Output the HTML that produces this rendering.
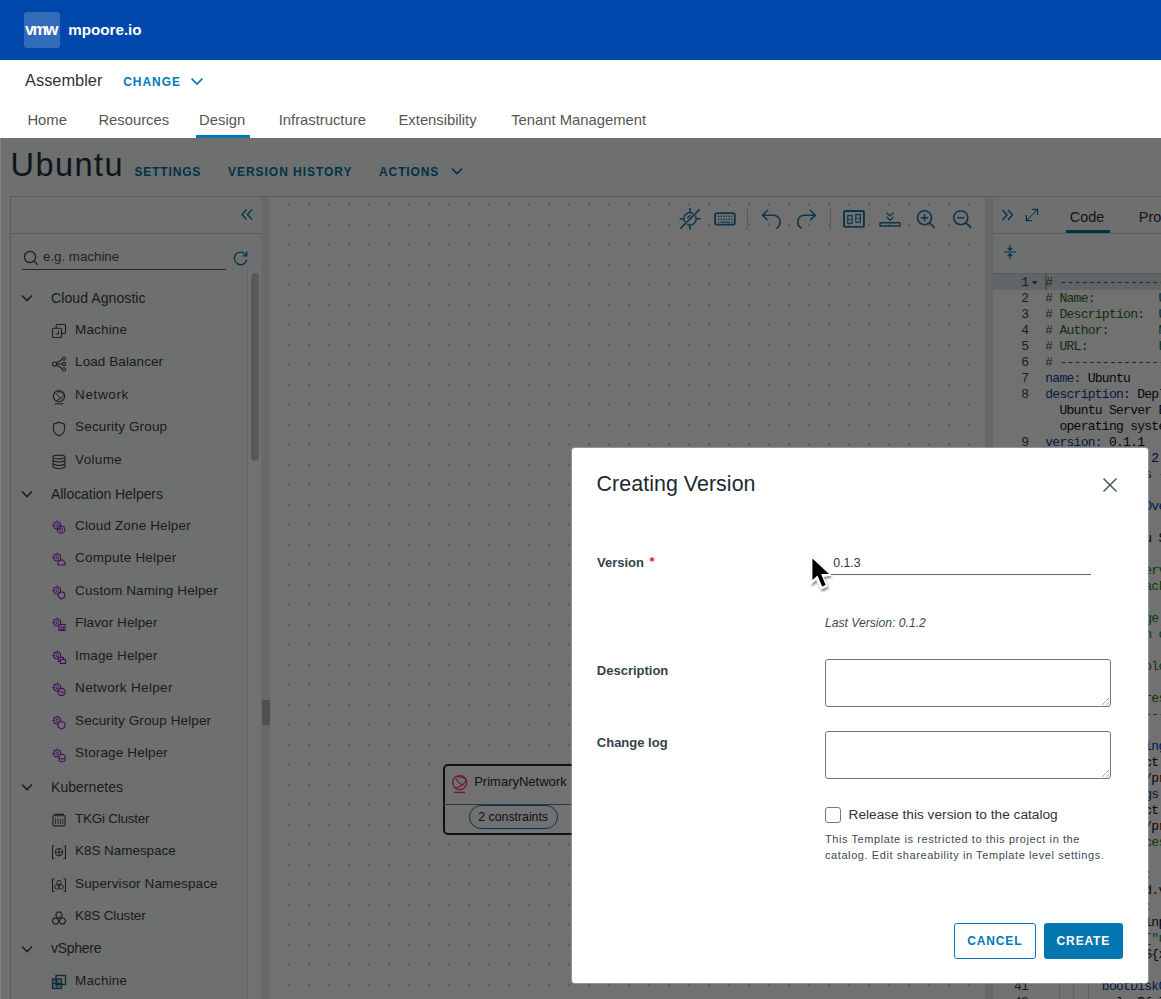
<!DOCTYPE html><html><head><meta charset="utf-8"><style>
html,body{margin:0;padding:0;width:1161px;height:999px;overflow:hidden;background:#fff;}
body{position:relative;font-family:"Liberation Sans",sans-serif;}
.t{position:absolute;white-space:pre;}
.r{position:absolute;display:block;}
</style></head><body>
<div class="r" style="left:0px;top:0px;width:1161px;height:60px;background:#0047ab;"></div>
<div class="r" style="left:24px;top:12px;width:36px;height:36px;background:rgba(255,255,255,0.2);border-radius:3px;"></div>
<div class="t" style="left:25.00px;top:17.53px;font-size:16.5px;line-height:23.1px;color:#fff;font-weight:bold;font-style:normal;font-family:'Liberation Sans', sans-serif;letter-spacing:-1.7px;">vmw</div>
<div class="t" style="left:68.20px;top:18.99px;font-size:15.2px;line-height:21.28px;color:#fff;font-weight:bold;font-style:normal;font-family:'Liberation Sans', sans-serif;letter-spacing:0px;">mpoore.io</div>
<div class="t" style="left:25.00px;top:69.03px;font-size:16.4px;line-height:22.96px;color:#333;font-weight:normal;font-style:normal;font-family:'Liberation Sans', sans-serif;letter-spacing:0px;">Assembler</div>
<div class="t" style="left:123.20px;top:73.74px;font-size:12px;line-height:16.8px;color:#0079b8;font-weight:bold;font-style:normal;font-family:'Liberation Sans', sans-serif;letter-spacing:0.95px;">CHANGE</div>
<svg class="r" style="left:189px;top:75px;" width="16" height="12" viewBox="0 0 16 12"><polyline points="2.6,3.6 8,9 13.4,3.6" fill="none" stroke="#0079b8" stroke-width="1.6"/></svg>
<div class="t" style="left:27.40px;top:109.61px;font-size:14.8px;line-height:20.72px;color:#565656;font-weight:normal;font-style:normal;font-family:'Liberation Sans', sans-serif;letter-spacing:0px;">Home</div>
<div class="t" style="left:98.40px;top:109.61px;font-size:14.8px;line-height:20.72px;color:#565656;font-weight:normal;font-style:normal;font-family:'Liberation Sans', sans-serif;letter-spacing:0px;">Resources</div>
<div class="t" style="left:199.10px;top:109.61px;font-size:14.8px;line-height:20.72px;color:#565656;font-weight:normal;font-style:normal;font-family:'Liberation Sans', sans-serif;letter-spacing:0px;">Design</div>
<div class="t" style="left:278.70px;top:109.61px;font-size:14.8px;line-height:20.72px;color:#565656;font-weight:normal;font-style:normal;font-family:'Liberation Sans', sans-serif;letter-spacing:0px;">Infrastructure</div>
<div class="t" style="left:398.50px;top:109.61px;font-size:14.8px;line-height:20.72px;color:#565656;font-weight:normal;font-style:normal;font-family:'Liberation Sans', sans-serif;letter-spacing:0px;">Extensibility</div>
<div class="t" style="left:511.20px;top:109.61px;font-size:14.8px;line-height:20.72px;color:#565656;font-weight:normal;font-style:normal;font-family:'Liberation Sans', sans-serif;letter-spacing:0px;">Tenant Management</div>
<div class="r" style="left:196px;top:135px;width:54px;height:3px;background:#0079b8;"></div>
<div class="r" style="left:0px;top:138px;width:1161px;height:861px;background:#f9fcfb;"></div>
<div class="t" style="left:10.60px;top:142.98px;font-size:32.5px;line-height:45.5px;color:#21333b;font-weight:normal;font-style:normal;font-family:'Liberation Sans', sans-serif;letter-spacing:1.45px;">Ubuntu</div>
<div class="t" style="left:134.40px;top:164.14px;font-size:12px;line-height:16.8px;color:#0072a3;font-weight:bold;font-style:normal;font-family:'Liberation Sans', sans-serif;letter-spacing:0.85px;">SETTINGS</div>
<div class="t" style="left:228.10px;top:164.14px;font-size:12px;line-height:16.8px;color:#0072a3;font-weight:bold;font-style:normal;font-family:'Liberation Sans', sans-serif;letter-spacing:0.95px;">VERSION HISTORY</div>
<div class="t" style="left:379.10px;top:164.14px;font-size:12px;line-height:16.8px;color:#0072a3;font-weight:bold;font-style:normal;font-family:'Liberation Sans', sans-serif;letter-spacing:0.85px;">ACTIONS</div>
<svg class="r" style="left:449px;top:164px;" width="16" height="14" viewBox="0 0 16 14"><polyline points="2.8,4.5 8,9.6 13.2,4.5" fill="none" stroke="#0072a3" stroke-width="1.6"/></svg>
<div class="r" style="left:10px;top:196px;width:1151px;height:1px;background:#c6cfd5;"></div>
<div class="r" style="left:10px;top:197px;width:251px;height:802px;background:#f9fcfb;"></div>
<div class="r" style="left:10px;top:196px;width:1px;height:803px;background:#c6cfd5;"></div>
<div class="r" style="left:10px;top:233px;width:252px;height:1px;background:#c6cfd5;"></div>
<svg class="r" style="left:240px;top:207px;" width="14" height="15" viewBox="0 0 14 15"><polyline points="6.5,2.5 2,7.5 6.5,12.5" fill="none" stroke="#0072a3" stroke-width="1.3"/><polyline points="12,2.5 7.5,7.5 12,12.5" fill="none" stroke="#0072a3" stroke-width="1.3"/></svg>
<svg class="r" style="left:22px;top:249px;" width="18" height="18" viewBox="0 0 18 18"><circle cx="8" cy="8" r="5.6" fill="none" stroke="#3a3f43" stroke-width="1.3"/><line x1="12.2" y1="12.2" x2="15.6" y2="15.6" stroke="#3a3f43" stroke-width="1.3"/></svg>
<div class="t" style="left:43.00px;top:247.98px;font-size:13.3px;line-height:18.62px;color:#4d4d4d;font-weight:normal;font-style:normal;font-family:'Liberation Sans', sans-serif;letter-spacing:0px;">e.g. machine</div>
<div class="r" style="left:22px;top:269px;width:204px;height:1px;background:#4d5a61;"></div>
<svg class="r" style="left:232px;top:249px;" width="18" height="18" viewBox="0 0 18 18"><path d="M14.6,7.2 A6.3,6.3 0 1 0 14.9,10.5" fill="none" stroke="#0072a3" stroke-width="1.3"/><polyline points="10.6,6.8 14.8,6.8 14.8,2.6" fill="none" stroke="#0072a3" stroke-width="1.3"/></svg>
<div class="r" style="left:247px;top:270px;width:14px;height:729px;background:#fff;border-left:1px solid #e3e3e3;box-sizing:border-box;"></div>
<div class="r" style="left:251px;top:273px;width:8px;height:188px;background:#c8c8c8;border-radius:4px;"></div>
<div class="r" style="left:261px;top:197px;width:9px;height:802px;background:#ececec;"></div>
<div class="r" style="left:262px;top:700px;width:8px;height:25px;background:#b4b4b4;"></div>
<svg class="r" style="left:20px;top:293.40000000000003px;" width="14" height="10" viewBox="0 0 14 10"><polyline points="2,2.5 7,7.6 12,2.5" fill="none" stroke="#3a3f43" stroke-width="1.5"/></svg>
<div class="t" style="left:51.00px;top:288.65px;font-size:14px;line-height:19.6px;color:#3a3f43;font-weight:normal;font-style:normal;font-family:'Liberation Sans', sans-serif;letter-spacing:0.09px;">Cloud Agnostic</div>
<div class="t" style="left:75.10px;top:320.67px;font-size:13.5px;line-height:18.9px;color:#3a3f43;font-weight:normal;font-style:normal;font-family:'Liberation Sans', sans-serif;letter-spacing:0.13px;">Machine</div>
<svg class="r" style="left:51px;top:322.8px;" width="16" height="16" viewBox="0 0 16 16"><rect x="5.2" y="1.5" width="9.3" height="9" rx="1" fill="none" stroke="#454545" stroke-width="1.1"/><rect x="1.5" y="5.2" width="9" height="9.3" rx="1" fill="#fafafa" stroke="#454545" stroke-width="1.1"/><polyline points="7.5,7.5 7.5,11 4.5,11" fill="none" stroke="#454545" stroke-width="1"/></svg>
<div class="t" style="left:75.10px;top:353.47px;font-size:13.5px;line-height:18.9px;color:#3a3f43;font-weight:normal;font-style:normal;font-family:'Liberation Sans', sans-serif;letter-spacing:0.08px;">Load Balancer</div>
<svg class="r" style="left:51px;top:355.6px;" width="16" height="16" viewBox="0 0 16 16"><circle cx="3.5" cy="8" r="2" fill="none" stroke="#454545" stroke-width="1.1"/><circle cx="13" cy="2.6" r="1.6" fill="none" stroke="#454545" stroke-width="1.1"/><circle cx="13" cy="8" r="1.6" fill="none" stroke="#454545" stroke-width="1.1"/><circle cx="13" cy="13.4" r="1.6" fill="none" stroke="#454545" stroke-width="1.1"/><path d="M5.5,8 H11.4 M5.2,7 L11.5,3.2 M5.2,9 L11.5,12.8" stroke="#454545" stroke-width="1.1" fill="none"/></svg>
<div class="t" style="left:75.10px;top:386.37px;font-size:13.5px;line-height:18.9px;color:#3a3f43;font-weight:normal;font-style:normal;font-family:'Liberation Sans', sans-serif;letter-spacing:0.62px;">Network</div>
<svg class="r" style="left:51px;top:388.5px;" width="16" height="16" viewBox="0 0 16 16"><circle cx="8" cy="7.2" r="5.6" fill="none" stroke="#454545" stroke-width="1.1"/><path d="M5.1,4.1 Q7.1,8.1 10.3,9.2 L13.3,5.2 M10.3,9.2 L4.7,11.9 M6,2.9 Q10,2.3 12.8,4.6" fill="none" stroke="#454545" stroke-width="0.9"/><line x1="3.7" y1="14.8" x2="12.3" y2="14.8" stroke="#454545" stroke-width="1.1"/></svg>
<div class="t" style="left:75.10px;top:418.47px;font-size:13.5px;line-height:18.9px;color:#3a3f43;font-weight:normal;font-style:normal;font-family:'Liberation Sans', sans-serif;letter-spacing:0.15px;">Security Group</div>
<svg class="r" style="left:51px;top:420.6px;" width="16" height="16" viewBox="0 0 16 16"><path d="M8,1.2 L13.5,3.2 V8 Q13.5,12.5 8,15 Q2.5,12.5 2.5,8 V3.2 Z" fill="none" stroke="#454545" stroke-width="1.1"/></svg>
<div class="t" style="left:75.10px;top:451.37px;font-size:13.5px;line-height:18.9px;color:#3a3f43;font-weight:normal;font-style:normal;font-family:'Liberation Sans', sans-serif;letter-spacing:0.32px;">Volume</div>
<svg class="r" style="left:51px;top:453.5px;" width="16" height="16" viewBox="0 0 16 16"><ellipse cx="8" cy="3" rx="6" ry="1.9" fill="none" stroke="#454545" stroke-width="1.1"/><path d="M2,3 V13 Q8,16.5 14,13 V3 M2,6.5 Q8,9.5 14,6.5 M2,10 Q8,13 14,10" fill="none" stroke="#454545" stroke-width="1.1"/></svg>
<svg class="r" style="left:20px;top:489.3px;" width="14" height="10" viewBox="0 0 14 10"><polyline points="2,2.5 7,7.6 12,2.5" fill="none" stroke="#3a3f43" stroke-width="1.5"/></svg>
<div class="t" style="left:51.00px;top:484.55px;font-size:14px;line-height:19.6px;color:#3a3f43;font-weight:normal;font-style:normal;font-family:'Liberation Sans', sans-serif;letter-spacing:-0.05px;">Allocation Helpers</div>
<div class="t" style="left:75.10px;top:516.57px;font-size:13.5px;line-height:18.9px;color:#3a3f43;font-weight:normal;font-style:normal;font-family:'Liberation Sans', sans-serif;letter-spacing:0.14px;">Cloud Zone Helper</div>
<svg class="r" style="left:51px;top:518.6999999999999px;" width="16" height="16" viewBox="0 0 16 16"><circle cx="6.2" cy="6.5" r="3.5" fill="none" stroke="#9a1ccf" stroke-width="1.15"/><circle cx="6.2" cy="6.5" r="1.4" fill="none" stroke="#9a1ccf" stroke-width="0.9"/><path d="M6.2,1.4 V2.9 M1.1,6.5 H2.6 M2.6,2.9 L3.6,3.9" stroke="#9a1ccf" stroke-width="0.9"/><circle cx="10" cy="10.5" r="3.8" fill="none" stroke="#9a1ccf" stroke-width="1.1"/><circle cx="10" cy="10.5" r="1.6" fill="none" stroke="#9a1ccf" stroke-width="1"/></svg>
<div class="t" style="left:75.10px;top:549.07px;font-size:13.5px;line-height:18.9px;color:#3a3f43;font-weight:normal;font-style:normal;font-family:'Liberation Sans', sans-serif;letter-spacing:0.22px;">Compute Helper</div>
<svg class="r" style="left:51px;top:551.1999999999999px;" width="16" height="16" viewBox="0 0 16 16"><circle cx="6.2" cy="6.5" r="3.5" fill="none" stroke="#9a1ccf" stroke-width="1.15"/><circle cx="6.2" cy="6.5" r="1.4" fill="none" stroke="#9a1ccf" stroke-width="0.9"/><path d="M6.2,1.4 V2.9 M1.1,6.5 H2.6 M2.6,2.9 L3.6,3.9" stroke="#9a1ccf" stroke-width="0.9"/><path d="M7,14 H14 Q15,11 12.5,10 Q11.5,8 9.5,9.5 Q7,9.5 7,12 Z" fill="#fafafa" stroke="#9a1ccf" stroke-width="1.1"/></svg>
<div class="t" style="left:75.10px;top:581.67px;font-size:13.5px;line-height:18.9px;color:#3a3f43;font-weight:normal;font-style:normal;font-family:'Liberation Sans', sans-serif;letter-spacing:0.12px;">Custom Naming Helper</div>
<svg class="r" style="left:51px;top:583.8px;" width="16" height="16" viewBox="0 0 16 16"><circle cx="6.2" cy="6.5" r="3.5" fill="none" stroke="#9a1ccf" stroke-width="1.15"/><circle cx="6.2" cy="6.5" r="1.4" fill="none" stroke="#9a1ccf" stroke-width="0.9"/><path d="M6.2,1.4 V2.9 M1.1,6.5 H2.6 M2.6,2.9 L3.6,3.9" stroke="#9a1ccf" stroke-width="0.9"/><path d="M8,8.5 L13,8 L14,13 L10,15 L7,12 Z" fill="#fafafa" stroke="#9a1ccf" stroke-width="1.1"/></svg>
<div class="t" style="left:75.10px;top:614.17px;font-size:13.5px;line-height:18.9px;color:#3a3f43;font-weight:normal;font-style:normal;font-family:'Liberation Sans', sans-serif;letter-spacing:0.11px;">Flavor Helper</div>
<svg class="r" style="left:51px;top:616.3px;" width="16" height="16" viewBox="0 0 16 16"><circle cx="6.2" cy="6.5" r="3.5" fill="none" stroke="#9a1ccf" stroke-width="1.15"/><circle cx="6.2" cy="6.5" r="1.4" fill="none" stroke="#9a1ccf" stroke-width="0.9"/><path d="M6.2,1.4 V2.9 M1.1,6.5 H2.6 M2.6,2.9 L3.6,3.9" stroke="#9a1ccf" stroke-width="0.9"/><rect x="8" y="8.5" width="6" height="6" fill="#fafafa" stroke="#9a1ccf" stroke-width="1.1"/><rect x="10" y="11" width="2.5" height="2.5" fill="none" stroke="#9a1ccf" stroke-width="0.9"/></svg>
<div class="t" style="left:75.10px;top:646.67px;font-size:13.5px;line-height:18.9px;color:#3a3f43;font-weight:normal;font-style:normal;font-family:'Liberation Sans', sans-serif;letter-spacing:0.12px;">Image Helper</div>
<svg class="r" style="left:51px;top:648.8px;" width="16" height="16" viewBox="0 0 16 16"><circle cx="6.2" cy="6.5" r="3.5" fill="none" stroke="#9a1ccf" stroke-width="1.15"/><circle cx="6.2" cy="6.5" r="1.4" fill="none" stroke="#9a1ccf" stroke-width="0.9"/><path d="M6.2,1.4 V2.9 M1.1,6.5 H2.6 M2.6,2.9 L3.6,3.9" stroke="#9a1ccf" stroke-width="0.9"/><rect x="7.5" y="8.5" width="5" height="4" fill="#fafafa" stroke="#9a1ccf" stroke-width="1.1"/><rect x="9.5" y="10.5" width="5" height="4" fill="#fafafa" stroke="#9a1ccf" stroke-width="1.1"/></svg>
<div class="t" style="left:75.10px;top:679.27px;font-size:13.5px;line-height:18.9px;color:#3a3f43;font-weight:normal;font-style:normal;font-family:'Liberation Sans', sans-serif;letter-spacing:0.33px;">Network Helper</div>
<svg class="r" style="left:51px;top:681.4px;" width="16" height="16" viewBox="0 0 16 16"><circle cx="6.2" cy="6.5" r="3.5" fill="none" stroke="#9a1ccf" stroke-width="1.15"/><circle cx="6.2" cy="6.5" r="1.4" fill="none" stroke="#9a1ccf" stroke-width="0.9"/><path d="M6.2,1.4 V2.9 M1.1,6.5 H2.6 M2.6,2.9 L3.6,3.9" stroke="#9a1ccf" stroke-width="0.9"/><circle cx="10.5" cy="11" r="3.6" fill="#fafafa" stroke="#9a1ccf" stroke-width="1.1"/><path d="M8,10 L13,12" stroke="#9a1ccf" stroke-width="1"/></svg>
<div class="t" style="left:75.10px;top:711.77px;font-size:13.5px;line-height:18.9px;color:#3a3f43;font-weight:normal;font-style:normal;font-family:'Liberation Sans', sans-serif;letter-spacing:0.12px;">Security Group Helper</div>
<svg class="r" style="left:51px;top:713.9px;" width="16" height="16" viewBox="0 0 16 16"><circle cx="6.2" cy="6.5" r="3.5" fill="none" stroke="#9a1ccf" stroke-width="1.15"/><circle cx="6.2" cy="6.5" r="1.4" fill="none" stroke="#9a1ccf" stroke-width="0.9"/><path d="M6.2,1.4 V2.9 M1.1,6.5 H2.6 M2.6,2.9 L3.6,3.9" stroke="#9a1ccf" stroke-width="0.9"/><path d="M10.5,7.5 L14,8.8 V11.5 Q14,14 10.5,15 Q7,14 7,11.5 V8.8 Z" fill="#fafafa" stroke="#9a1ccf" stroke-width="1.1"/></svg>
<div class="t" style="left:75.10px;top:744.37px;font-size:13.5px;line-height:18.9px;color:#3a3f43;font-weight:normal;font-style:normal;font-family:'Liberation Sans', sans-serif;letter-spacing:0.15px;">Storage Helper</div>
<svg class="r" style="left:51px;top:746.5px;" width="16" height="16" viewBox="0 0 16 16"><circle cx="6.2" cy="6.5" r="3.5" fill="none" stroke="#9a1ccf" stroke-width="1.15"/><circle cx="6.2" cy="6.5" r="1.4" fill="none" stroke="#9a1ccf" stroke-width="0.9"/><path d="M6.2,1.4 V2.9 M1.1,6.5 H2.6 M2.6,2.9 L3.6,3.9" stroke="#9a1ccf" stroke-width="0.9"/><ellipse cx="11" cy="8.5" rx="3" ry="1.2" fill="#fafafa" stroke="#9a1ccf" stroke-width="1"/><path d="M8,8.5 V14 Q11,15.8 14,14 V8.5 M8,11.3 Q11,13 14,11.3" fill="#fafafa" stroke="#9a1ccf" stroke-width="1"/></svg>
<svg class="r" style="left:20px;top:782.4px;" width="14" height="10" viewBox="0 0 14 10"><polyline points="2,2.5 7,7.6 12,2.5" fill="none" stroke="#3a3f43" stroke-width="1.5"/></svg>
<div class="t" style="left:51.00px;top:777.65px;font-size:14px;line-height:19.6px;color:#3a3f43;font-weight:normal;font-style:normal;font-family:'Liberation Sans', sans-serif;letter-spacing:0.04px;">Kubernetes</div>
<div class="t" style="left:75.10px;top:809.87px;font-size:13.5px;line-height:18.9px;color:#3a3f43;font-weight:normal;font-style:normal;font-family:'Liberation Sans', sans-serif;letter-spacing:-0.27px;">TKGi Cluster</div>
<svg class="r" style="left:51px;top:812.0px;" width="16" height="16" viewBox="0 0 16 16"><path d="M3,2.3 H13" stroke="#454545" stroke-width="1.2"/><path d="M1.9,3.8 H14.1 V12.5 Q14.1,13.9 12.7,13.9 H3.3 Q1.9,13.9 1.9,12.5 Z" fill="none" stroke="#454545" stroke-width="1.1"/><path d="M4.6,6.5 V12 M7,6.5 V12 M9.4,6.5 V12 M11.8,6.5 V12" stroke="#454545" stroke-width="0.9"/></svg>
<div class="t" style="left:75.10px;top:841.87px;font-size:13.5px;line-height:18.9px;color:#3a3f43;font-weight:normal;font-style:normal;font-family:'Liberation Sans', sans-serif;letter-spacing:-0.06px;">K8S Namespace</div>
<svg class="r" style="left:51px;top:844.0px;" width="16" height="16" viewBox="0 0 16 16"><path d="M3.5,2 H1.5 V14.5 H3.5 M12.5,2 H14.5 V14.5 H12.5" fill="none" stroke="#454545" stroke-width="1.1"/><circle cx="8" cy="8.2" r="3.8" fill="none" stroke="#454545" stroke-width="1"/><path d="M8,4.5 V12 M4.3,8.2 H11.7" stroke="#454545" stroke-width="1"/></svg>
<div class="t" style="left:75.10px;top:874.67px;font-size:13.5px;line-height:18.9px;color:#3a3f43;font-weight:normal;font-style:normal;font-family:'Liberation Sans', sans-serif;letter-spacing:0.11px;">Supervisor Namespace</div>
<svg class="r" style="left:51px;top:876.8px;" width="16" height="16" viewBox="0 0 16 16"><path d="M3.5,2 H1.5 V14.5 H3.5 M12.5,2 H14.5 V14.5 H12.5" fill="none" stroke="#454545" stroke-width="1.1"/><circle cx="8" cy="5.6" r="2.2" fill="none" stroke="#454545" stroke-width="1"/><circle cx="5.8" cy="10" r="2.2" fill="none" stroke="#454545" stroke-width="1"/><circle cx="10.2" cy="10" r="2.2" fill="none" stroke="#454545" stroke-width="1"/></svg>
<div class="t" style="left:75.10px;top:907.47px;font-size:13.5px;line-height:18.9px;color:#3a3f43;font-weight:normal;font-style:normal;font-family:'Liberation Sans', sans-serif;letter-spacing:-0.15px;">K8S Cluster</div>
<svg class="r" style="left:51px;top:909.5999999999999px;" width="16" height="16" viewBox="0 0 16 16"><polygon points="11.30,5.00 9.65,7.86 6.35,7.86 4.70,5.00 6.35,2.14 9.65,2.14" fill="none" stroke="#454545" stroke-width="1.1"/><polygon points="7.90,11.00 6.25,13.86 2.95,13.86 1.30,11.00 2.95,8.14 6.25,8.14" fill="none" stroke="#454545" stroke-width="1.1"/><polygon points="14.70,11.00 13.05,13.86 9.75,13.86 8.10,11.00 9.75,8.14 13.05,8.14" fill="none" stroke="#454545" stroke-width="1.1"/></svg>
<svg class="r" style="left:20px;top:944.1999999999999px;" width="14" height="10" viewBox="0 0 14 10"><polyline points="2,2.5 7,7.6 12,2.5" fill="none" stroke="#3a3f43" stroke-width="1.5"/></svg>
<div class="t" style="left:51.00px;top:939.45px;font-size:14px;line-height:19.6px;color:#3a3f43;font-weight:normal;font-style:normal;font-family:'Liberation Sans', sans-serif;letter-spacing:-0.27px;">vSphere</div>
<div class="t" style="left:75.10px;top:971.67px;font-size:13.5px;line-height:18.9px;color:#3a3f43;font-weight:normal;font-style:normal;font-family:'Liberation Sans', sans-serif;letter-spacing:0.13px;">Machine</div>
<svg class="r" style="left:51px;top:973.8px;" width="16" height="16" viewBox="0 0 16 16"><rect x="5" y="1.5" width="9.5" height="9" fill="none" stroke="#1d5e7e" stroke-width="1.3"/><rect x="1.5" y="5" width="9" height="9.5" fill="#1d5e7e" fill-opacity="0.25" stroke="#1d5e7e" stroke-width="1.3"/><line x1="1.5" y1="9.5" x2="10.5" y2="9.5" stroke="#1d5e7e" stroke-width="1"/><line x1="6" y1="5" x2="6" y2="14.5" stroke="#1d5e7e" stroke-width="1"/></svg>
<div class="r" style="left:270px;top:197px;width:715px;height:802px;background-color:#fff;background-image:radial-gradient(circle at 1px 1px,#bcc4c9 0,#bcc4c9 0.85px,rgba(255,255,255,0) 1.4px);background-size:20px 20px;background-position:18.2px 6.6px;"></div>
<svg class="r" style="left:670px;top:200px;" width="320" height="40" viewBox="0 0 320 40"><g transform="translate(-670,-200)" fill="none" stroke="#1d78ad"><circle cx="690" cy="218.8" r="6.2" stroke-width="1.5"/><path d="M690,208 V211.8 M690,225.8 V229.6 M679.6,218.8 H683.4 M696.6,218.8 H700.4" stroke-width="1.6"/><path d="M687.6,218.5 A2.6,2.6 0 0 1 691.5,216.4" stroke-width="1.3"/><line x1="680.3" y1="228.6" x2="699.6" y2="209.4" stroke="#fff" stroke-width="3.2"/><line x1="680.3" y1="228.6" x2="699.6" y2="209.4" stroke-width="1.5"/><rect x="715.1" y="213.2" width="19.7" height="11.5" rx="2" stroke-width="1.8"/><path d="M718,216.3 H732.6 M718,219.2 H732.6" stroke-width="1.4" stroke-dasharray="1.4 1.2"/><path d="M718,222.2 H719.3 M720.6,222.2 H729.8 M731.2,222.2 H732.6" stroke-width="1.3"/><path d="M767.7,210 L762.6,215.2 L767.7,220.3 M762.8,215.2 H773.5 A6.8,6.8 0 0 1 776,228.2" stroke-width="1.6"/><path d="M810.1,210 L815.2,215.2 L810.1,220.3 M815,215.2 H804.4 A6.8,6.8 0 0 0 801.8,228.2" stroke-width="1.6"/><rect x="844.05" y="210.95" width="19.9" height="15.9" rx="1.2" stroke-width="1.9"/><rect x="847.75" y="215.55" width="4.4" height="7.9" stroke-width="1.2"/><path d="M847.8,219.5 H852.2" stroke-width="0.8"/><rect x="855.85" y="214.55" width="4.5" height="7.7" stroke-width="1.2"/><path d="M855.9,218.4 H860.3" stroke-width="0.8"/><rect x="880" y="222.8" width="20" height="3.2" rx="0.6" stroke-width="1.5"/><path d="M886.5,212.7 L890,215.9 L893.5,212.7 M886.5,216.9 L890,220.3 L893.5,216.9" stroke-width="1.3"/><circle cx="924.5" cy="217.7" r="7" stroke-width="1.6"/><path d="M929.6,222.8 L934.8,227.8" stroke-width="1.6"/><path d="M924.5,213.9 V221.5 M920.7,217.7 H928.3" stroke-width="1.5"/><circle cx="960.8" cy="217.7" r="7" stroke-width="1.6"/><path d="M965.9,222.8 L971.1,227.8" stroke-width="1.6"/><path d="M957,217.7 H964.6" stroke-width="1.5"/></g></svg>
<div class="r" style="left:747px;top:207.7px;width:1px;height:22.6px;background:#c6cfd5;"></div>
<div class="r" style="left:830px;top:207.7px;width:1px;height:22.6px;background:#c6cfd5;"></div>
<div class="r" style="left:442.5px;top:763.5px;width:200px;height:71.5px;border:2px solid #1b2a32;border-radius:5px;box-sizing:border-box;background:#fff;"></div>
<div class="r" style="left:443px;top:803.6px;width:199px;height:1px;background:#6f7c84;"></div>
<svg class="r" style="left:446px;top:770px;" width="28" height="28" viewBox="0 0 28 28"><g transform="translate(-446,-770)" fill="none" stroke="#ff2d87"><circle cx="459.7" cy="782.6" r="7.0" stroke-width="1.3"/><path d="M456.0,778.6 Q458.6,783.6 462.6,785.0 L466.6,779.8 M462.6,785.0 L455.6,788.6 M457.2,777.0 Q462.4,776.2 466.0,779.2" stroke-width="1.1"/><line x1="454.2" y1="792.4" x2="465.0" y2="792.4" stroke-width="1.4"/></g></svg>
<div class="t" style="left:474.20px;top:772.89px;font-size:13px;line-height:18.2px;color:#1b2a32;font-weight:normal;font-style:normal;font-family:'Liberation Sans', sans-serif;letter-spacing:0px;">PrimaryNetwork</div>
<div class="r" style="left:469.3px;top:805.4px;width:88.4px;height:23.3px;border:1px solid #0079b8;border-radius:12px;box-sizing:border-box;"></div>
<div class="t" style="left:478.30px;top:808.93px;font-size:12.3px;line-height:17.22px;color:#1b2a32;font-weight:normal;font-style:normal;font-family:'Liberation Sans', sans-serif;letter-spacing:0px;">2 constraints</div>
<div class="r" style="left:985px;top:197px;width:8px;height:802px;background:#e8e8e8;"></div>
<div class="r" style="left:993px;top:197px;width:168px;height:802px;background:#f9fcfb;"></div>
<svg class="r" style="left:1000px;top:207px;" width="16" height="16" viewBox="0 0 16 16"><polyline points="2.5,3 7,8 2.5,13" fill="none" stroke="#0072a3" stroke-width="1.3"/><polyline points="8,3 12.5,8 8,13" fill="none" stroke="#0072a3" stroke-width="1.3"/></svg>
<svg class="r" style="left:1020px;top:204px;" width="22" height="22" viewBox="0 0 22 22"><g transform="translate(-1020,-204)" fill="none" stroke="#0072a3"><path d="M1027,220 L1037.2,209.8" stroke-width="1.0"/><path d="M1032.3,209.4 H1037.6 V214.8 M1026.4,215 V220.5 H1031.8" stroke-width="1.25"/></g></svg>
<div class="t" style="left:1069.80px;top:207.03px;font-size:14.4px;line-height:20.16px;color:#313131;font-weight:normal;font-style:normal;font-family:'Liberation Sans', sans-serif;letter-spacing:0px;">Code</div>
<div class="t" style="left:1138.80px;top:207.03px;font-size:14.4px;line-height:20.16px;color:#313131;font-weight:normal;font-style:normal;font-family:'Liberation Sans', sans-serif;letter-spacing:0px;">Pro</div>
<div class="r" style="left:1066px;top:230px;width:44px;height:3px;background:#0072a3;"></div>
<div class="r" style="left:993px;top:232.5px;width:168px;height:1px;background:#c6cfd5;"></div>
<svg class="r" style="left:1002px;top:243px;" width="16" height="18" viewBox="0 0 16 18"><path d="M2,9 H14 M8,2 V7 M8,11 V16 M5.6,4.8 L8,7.2 L10.4,4.8 M5.6,13.2 L8,10.8 L10.4,13.2" fill="none" stroke="#0072a3" stroke-width="1.2"/></svg>
<div class="r" style="left:993px;top:273px;width:168px;height:1px;background:#c6cfd5;"></div>
<div class="r" style="left:993px;top:274px;width:168px;height:725px;background:#fff;"></div>
<div class="r" style="left:993px;top:274px;width:52px;height:725px;background:#fff;"></div>
<div class="r" style="left:993px;top:274px;width:52px;height:16px;background:#dbe4ea;"></div>
<div class="r" style="left:1045px;top:274px;width:116px;height:16px;background:#dde5ea;"></div>
<div class="r" style="left:1045px;top:274px;width:1.6px;height:16px;background:#a3b0b8;"></div>
<div class="t" style="left:1021.13px;top:274.04px;font-size:13px;line-height:18.2px;color:#444;font-weight:normal;font-style:normal;font-family:'Liberation Mono', monospace;letter-spacing:-0.73px;">1</div>
<svg class="r" style="left:1031px;top:279.6px;" width="8" height="6" viewBox="0 0 8 6"><polygon points="1,1.2 6.5,1.2 3.75,4.2" fill="#333"/></svg>
<div class="t" style="left:1045.30px;top:274.04px;font-size:13px;line-height:18.2px;color:#236e24;font-weight:normal;font-style:normal;font-family:'Liberation Mono', monospace;letter-spacing:-0.73px;"># ------------------------------</div>
<div class="t" style="left:1021.13px;top:290.04px;font-size:13px;line-height:18.2px;color:#444;font-weight:normal;font-style:normal;font-family:'Liberation Mono', monospace;letter-spacing:-0.73px;">2</div>
<div class="t" style="left:1045.30px;top:290.04px;font-size:13px;line-height:18.2px;color:#236e24;font-weight:normal;font-style:normal;font-family:'Liberation Mono', monospace;letter-spacing:-0.73px;"># Name:         Ubuntu</div>
<div class="t" style="left:1021.13px;top:306.04px;font-size:13px;line-height:18.2px;color:#444;font-weight:normal;font-style:normal;font-family:'Liberation Mono', monospace;letter-spacing:-0.73px;">3</div>
<div class="t" style="left:1045.30px;top:306.04px;font-size:13px;line-height:18.2px;color:#236e24;font-weight:normal;font-style:normal;font-family:'Liberation Mono', monospace;letter-spacing:-0.73px;"># Description:  Ubuntu</div>
<div class="t" style="left:1021.13px;top:322.04px;font-size:13px;line-height:18.2px;color:#444;font-weight:normal;font-style:normal;font-family:'Liberation Mono', monospace;letter-spacing:-0.73px;">4</div>
<div class="t" style="left:1045.30px;top:322.04px;font-size:13px;line-height:18.2px;color:#236e24;font-weight:normal;font-style:normal;font-family:'Liberation Mono', monospace;letter-spacing:-0.73px;"># Author:       Michael</div>
<div class="t" style="left:1021.13px;top:338.04px;font-size:13px;line-height:18.2px;color:#444;font-weight:normal;font-style:normal;font-family:'Liberation Mono', monospace;letter-spacing:-0.73px;">5</div>
<div class="t" style="left:1045.30px;top:338.04px;font-size:13px;line-height:18.2px;color:#236e24;font-weight:normal;font-style:normal;font-family:'Liberation Mono', monospace;letter-spacing:-0.73px;"># URL:          h</div>
<div class="t" style="left:1021.13px;top:354.04px;font-size:13px;line-height:18.2px;color:#444;font-weight:normal;font-style:normal;font-family:'Liberation Mono', monospace;letter-spacing:-0.73px;">6</div>
<div class="t" style="left:1045.30px;top:354.04px;font-size:13px;line-height:18.2px;color:#236e24;font-weight:normal;font-style:normal;font-family:'Liberation Mono', monospace;letter-spacing:-0.73px;"># ------------------------------</div>
<div class="t" style="left:1021.13px;top:370.04px;font-size:13px;line-height:18.2px;color:#444;font-weight:normal;font-style:normal;font-family:'Liberation Mono', monospace;letter-spacing:-0.73px;">7</div>
<div class="t" style="left:1045.30px;top:370.04px;font-size:13px;line-height:18.2px;color:#0b3d91;font-weight:normal;font-style:normal;font-family:'Liberation Mono', monospace;letter-spacing:-0.73px;">name:</div>
<div class="t" style="left:1080.65px;top:370.04px;font-size:13px;line-height:18.2px;color:#111;font-weight:normal;font-style:normal;font-family:'Liberation Mono', monospace;letter-spacing:-0.73px;"> Ubuntu</div>
<div class="t" style="left:1021.13px;top:386.04px;font-size:13px;line-height:18.2px;color:#444;font-weight:normal;font-style:normal;font-family:'Liberation Mono', monospace;letter-spacing:-0.73px;">8</div>
<div class="t" style="left:1045.30px;top:386.04px;font-size:13px;line-height:18.2px;color:#0b3d91;font-weight:normal;font-style:normal;font-family:'Liberation Mono', monospace;letter-spacing:-0.73px;">description:</div>
<div class="t" style="left:1130.14px;top:386.04px;font-size:13px;line-height:18.2px;color:#111;font-weight:normal;font-style:normal;font-family:'Liberation Mono', monospace;letter-spacing:-0.73px;"> Deploys</div>
<div class="t" style="left:1045.30px;top:402.04px;font-size:13px;line-height:18.2px;color:#111;font-weight:normal;font-style:normal;font-family:'Liberation Mono', monospace;letter-spacing:-0.73px;">  Ubuntu Server Blah</div>
<div class="t" style="left:1045.30px;top:418.04px;font-size:13px;line-height:18.2px;color:#111;font-weight:normal;font-style:normal;font-family:'Liberation Mono', monospace;letter-spacing:-0.73px;">  operating system</div>
<div class="t" style="left:1021.13px;top:434.04px;font-size:13px;line-height:18.2px;color:#444;font-weight:normal;font-style:normal;font-family:'Liberation Mono', monospace;letter-spacing:-0.73px;">9</div>
<div class="t" style="left:1045.30px;top:434.04px;font-size:13px;line-height:18.2px;color:#0b3d91;font-weight:normal;font-style:normal;font-family:'Liberation Mono', monospace;letter-spacing:-0.73px;">version:</div>
<div class="t" style="left:1101.86px;top:434.04px;font-size:13px;line-height:18.2px;color:#111;font-weight:normal;font-style:normal;font-family:'Liberation Mono', monospace;letter-spacing:-0.73px;"> 0.1.1</div>
<div class="t" style="left:1014.06px;top:450.04px;font-size:13px;line-height:18.2px;color:#444;font-weight:normal;font-style:normal;font-family:'Liberation Mono', monospace;letter-spacing:-0.73px;">10</div>
<div class="t" style="left:1045.30px;top:450.04px;font-size:13px;line-height:18.2px;color:#0b3d91;font-weight:normal;font-style:normal;font-family:'Liberation Mono', monospace;letter-spacing:-0.73px;">formatVersion: </div>
<div class="t" style="left:1151.35px;top:450.04px;font-size:13px;line-height:18.2px;color:#0000cd;font-weight:normal;font-style:normal;font-family:'Liberation Mono', monospace;letter-spacing:-0.73px;">2</div>
<div class="t" style="left:1014.06px;top:466.04px;font-size:13px;line-height:18.2px;color:#444;font-weight:normal;font-style:normal;font-family:'Liberation Mono', monospace;letter-spacing:-0.73px;">11</div>
<div class="t" style="left:1045.30px;top:466.04px;font-size:13px;line-height:18.2px;color:#236e24;font-weight:normal;font-style:normal;font-family:'Liberation Mono', monospace;letter-spacing:-0.73px;">  # Input paras - xxxx</div>
<div class="t" style="left:1014.06px;top:498.04px;font-size:13px;line-height:18.2px;color:#444;font-weight:normal;font-style:normal;font-family:'Liberation Mono', monospace;letter-spacing:-0.73px;">13</div>
<div class="t" style="left:1045.30px;top:498.04px;font-size:13px;line-height:18.2px;color:#0b3d91;font-weight:normal;font-style:normal;font-family:'Liberation Mono', monospace;letter-spacing:-0.73px;">    imageXXX  Ovexxxx</div>
<div class="t" style="left:1014.06px;top:530.04px;font-size:13px;line-height:18.2px;color:#444;font-weight:normal;font-style:normal;font-family:'Liberation Mono', monospace;letter-spacing:-0.73px;">15</div>
<div class="t" style="left:1045.30px;top:530.04px;font-size:13px;line-height:18.2px;color:#111;font-weight:normal;font-style:normal;font-family:'Liberation Mono', monospace;letter-spacing:-0.73px;">      title:  u Sxxxx</div>
<div class="t" style="left:1014.06px;top:562.04px;font-size:13px;line-height:18.2px;color:#444;font-weight:normal;font-style:normal;font-family:'Liberation Mono', monospace;letter-spacing:-0.73px;">17</div>
<div class="t" style="left:1045.30px;top:562.04px;font-size:13px;line-height:18.2px;color:#1a7f1a;font-weight:normal;font-style:normal;font-family:'Liberation Mono', monospace;letter-spacing:-0.73px;">        - ubs ervxxxx</div>
<div class="t" style="left:1014.06px;top:578.04px;font-size:13px;line-height:18.2px;color:#444;font-weight:normal;font-style:normal;font-family:'Liberation Mono', monospace;letter-spacing:-0.73px;">18</div>
<div class="t" style="left:1045.30px;top:578.04px;font-size:13px;line-height:18.2px;color:#1a7f1a;font-weight:normal;font-style:normal;font-family:'Liberation Mono', monospace;letter-spacing:-0.73px;">        - sta ackxxxx</div>
<div class="t" style="left:1014.06px;top:610.04px;font-size:13px;line-height:18.2px;color:#444;font-weight:normal;font-style:normal;font-family:'Liberation Mono', monospace;letter-spacing:-0.73px;">20</div>
<div class="t" style="left:1045.30px;top:610.04px;font-size:13px;line-height:18.2px;color:#1a7f1a;font-weight:normal;font-style:normal;font-family:'Liberation Mono', monospace;letter-spacing:-0.73px;">      title:  ge xxxx</div>
<div class="t" style="left:1014.06px;top:626.04px;font-size:13px;line-height:18.2px;color:#444;font-weight:normal;font-style:normal;font-family:'Liberation Mono', monospace;letter-spacing:-0.73px;">21</div>
<div class="t" style="left:1045.30px;top:626.04px;font-size:13px;line-height:18.2px;color:#1a7f1a;font-weight:normal;font-style:normal;font-family:'Liberation Mono', monospace;letter-spacing:-0.73px;">        - Lin n cxxxx</div>
<div class="t" style="left:1014.06px;top:658.04px;font-size:13px;line-height:18.2px;color:#444;font-weight:normal;font-style:normal;font-family:'Liberation Mono', monospace;letter-spacing:-0.73px;">23</div>
<div class="t" style="left:1045.30px;top:658.04px;font-size:13px;line-height:18.2px;color:#1a7f1a;font-weight:normal;font-style:normal;font-family:'Liberation Mono', monospace;letter-spacing:-0.73px;">      default oloxxxx</div>
<div class="t" style="left:1014.06px;top:690.04px;font-size:13px;line-height:18.2px;color:#444;font-weight:normal;font-style:normal;font-family:'Liberation Mono', monospace;letter-spacing:-0.73px;">25</div>
<div class="t" style="left:1045.30px;top:690.04px;font-size:13px;line-height:18.2px;color:#236e24;font-weight:normal;font-style:normal;font-family:'Liberation Mono', monospace;letter-spacing:-0.73px;">  # xxxxxxxxx resxxxx</div>
<div class="t" style="left:1014.06px;top:706.04px;font-size:13px;line-height:18.2px;color:#444;font-weight:normal;font-style:normal;font-family:'Liberation Mono', monospace;letter-spacing:-0.73px;">26</div>
<div class="t" style="left:1045.30px;top:706.04px;font-size:13px;line-height:18.2px;color:#236e24;font-weight:normal;font-style:normal;font-family:'Liberation Mono', monospace;letter-spacing:-0.73px;">  # --------- ---xxxx</div>
<div class="t" style="left:1014.06px;top:738.04px;font-size:13px;line-height:18.2px;color:#444;font-weight:normal;font-style:normal;font-family:'Liberation Mono', monospace;letter-spacing:-0.73px;">28</div>
<div class="t" style="left:1045.30px;top:738.04px;font-size:13px;line-height:18.2px;color:#0b3d91;font-weight:normal;font-style:normal;font-family:'Liberation Mono', monospace;letter-spacing:-0.73px;">    cloudConf ingxxxx</div>
<div class="t" style="left:1014.06px;top:754.04px;font-size:13px;line-height:18.2px;color:#444;font-weight:normal;font-style:normal;font-family:'Liberation Mono', monospace;letter-spacing:-0.73px;">29</div>
<div class="t" style="left:1045.30px;top:754.04px;font-size:13px;line-height:18.2px;color:#111;font-weight:normal;font-style:normal;font-family:'Liberation Mono', monospace;letter-spacing:-0.73px;">      ${xxxxx ct xxxx</div>
<div class="t" style="left:1014.06px;top:770.04px;font-size:13px;line-height:18.2px;color:#444;font-weight:normal;font-style:normal;font-family:'Liberation Mono', monospace;letter-spacing:-0.73px;">30</div>
<div class="t" style="left:1045.30px;top:770.04px;font-size:13px;line-height:18.2px;color:#111;font-weight:normal;font-style:normal;font-family:'Liberation Mono', monospace;letter-spacing:-0.73px;">      ${xxxxx /prxxxx</div>
<div class="t" style="left:1014.06px;top:786.04px;font-size:13px;line-height:18.2px;color:#444;font-weight:normal;font-style:normal;font-family:'Liberation Mono', monospace;letter-spacing:-0.73px;">31</div>
<div class="t" style="left:1045.30px;top:786.04px;font-size:13px;line-height:18.2px;color:#0b3d91;font-weight:normal;font-style:normal;font-family:'Liberation Mono', monospace;letter-spacing:-0.73px;">    constrain gs xxxx</div>
<div class="t" style="left:1014.06px;top:802.04px;font-size:13px;line-height:18.2px;color:#444;font-weight:normal;font-style:normal;font-family:'Liberation Mono', monospace;letter-spacing:-0.73px;">32</div>
<div class="t" style="left:1045.30px;top:802.04px;font-size:13px;line-height:18.2px;color:#111;font-weight:normal;font-style:normal;font-family:'Liberation Mono', monospace;letter-spacing:-0.73px;">      ${xxxxx ct xxxx</div>
<div class="t" style="left:1014.06px;top:818.04px;font-size:13px;line-height:18.2px;color:#444;font-weight:normal;font-style:normal;font-family:'Liberation Mono', monospace;letter-spacing:-0.73px;">33</div>
<div class="t" style="left:1045.30px;top:818.04px;font-size:13px;line-height:18.2px;color:#111;font-weight:normal;font-style:normal;font-family:'Liberation Mono', monospace;letter-spacing:-0.73px;">      ${xxxxx /prxxxx</div>
<div class="t" style="left:1014.06px;top:834.04px;font-size:13px;line-height:18.2px;color:#444;font-weight:normal;font-style:normal;font-family:'Liberation Mono', monospace;letter-spacing:-0.73px;">34</div>
<div class="t" style="left:1045.30px;top:834.04px;font-size:13px;line-height:18.2px;color:#1a7f1a;font-weight:normal;font-style:normal;font-family:'Liberation Mono', monospace;letter-spacing:-0.73px;">      xxxxxxx cesxxxx</div>
<div class="t" style="left:1014.06px;top:866.04px;font-size:13px;line-height:18.2px;color:#444;font-weight:normal;font-style:normal;font-family:'Liberation Mono', monospace;letter-spacing:-0.73px;">36</div>
<div class="t" style="left:1045.30px;top:866.04px;font-size:13px;line-height:18.2px;color:#0b3d91;font-weight:normal;font-style:normal;font-family:'Liberation Mono', monospace;letter-spacing:-0.73px;">    xxxxxxxxx :  xxxx</div>
<div class="t" style="left:1014.06px;top:882.04px;font-size:13px;line-height:18.2px;color:#444;font-weight:normal;font-style:normal;font-family:'Liberation Mono', monospace;letter-spacing:-0.73px;">37</div>
<div class="t" style="left:1045.30px;top:882.04px;font-size:13px;line-height:18.2px;color:#111;font-weight:normal;font-style:normal;font-family:'Liberation Mono', monospace;letter-spacing:-0.73px;">      xxxxxxx d.vxxxx</div>
<div class="t" style="left:1014.06px;top:898.04px;font-size:13px;line-height:18.2px;color:#444;font-weight:normal;font-style:normal;font-family:'Liberation Mono', monospace;letter-spacing:-0.73px;">38</div>
<div class="t" style="left:1045.30px;top:898.04px;font-size:13px;line-height:18.2px;color:#0b3d91;font-weight:normal;font-style:normal;font-family:'Liberation Mono', monospace;letter-spacing:-0.73px;">    xxxxxxxxx :  xxxx</div>
<div class="t" style="left:1014.06px;top:914.04px;font-size:13px;line-height:18.2px;color:#444;font-weight:normal;font-style:normal;font-family:'Liberation Mono', monospace;letter-spacing:-0.73px;">39</div>
<div class="t" style="left:1045.30px;top:914.04px;font-size:13px;line-height:18.2px;color:#111;font-weight:normal;font-style:normal;font-family:'Liberation Mono', monospace;letter-spacing:-0.73px;">      xxxxxxx inpxxxx</div>
<div class="t" style="left:1014.06px;top:930.04px;font-size:13px;line-height:18.2px;color:#444;font-weight:normal;font-style:normal;font-family:'Liberation Mono', monospace;letter-spacing:-0.73px;">40</div>
<div class="t" style="left:1045.30px;top:930.04px;font-size:13px;line-height:18.2px;color:#111;font-weight:normal;font-style:normal;font-family:'Liberation Mono', monospace;letter-spacing:-0.73px;">      xxxxxxxx[</div>
<div class="t" style="left:1151.35px;top:930.04px;font-size:13px;line-height:18.2px;color:#1a7f1a;font-weight:normal;font-style:normal;font-family:'Liberation Mono', monospace;letter-spacing:-0.73px;">&quot;ubun</div>
<div class="t" style="left:1014.06px;top:946.04px;font-size:13px;line-height:18.2px;color:#444;font-weight:normal;font-style:normal;font-family:'Liberation Mono', monospace;letter-spacing:-0.73px;">40</div>
<div class="t" style="left:1045.30px;top:946.04px;font-size:13px;line-height:18.2px;color:#111;font-weight:normal;font-style:normal;font-family:'Liberation Mono', monospace;letter-spacing:-0.73px;">      xxxxxxx ${xxxxx</div>
<div class="t" style="left:1014.06px;top:978.04px;font-size:13px;line-height:18.2px;color:#444;font-weight:normal;font-style:normal;font-family:'Liberation Mono', monospace;letter-spacing:-0.73px;">41</div>
<div class="t" style="left:1045.30px;top:978.04px;font-size:13px;line-height:18.2px;color:#0b3d91;font-weight:normal;font-style:normal;font-family:'Liberation Mono', monospace;letter-spacing:-0.73px;">        bootDiskCapacity</div>
<div class="t" style="left:1014.06px;top:994.04px;font-size:13px;line-height:18.2px;color:#444;font-weight:normal;font-style:normal;font-family:'Liberation Mono', monospace;letter-spacing:-0.73px;">42</div>
<div class="t" style="left:1045.30px;top:994.04px;font-size:13px;line-height:18.2px;color:#111;font-weight:normal;font-style:normal;font-family:'Liberation Mono', monospace;letter-spacing:-0.73px;">          l. ${x}</div>
<div class="r" style="left:1058.5px;top:978px;width:1px;height:21px;background:#d8d8d8;"></div>
<div class="r" style="left:1072.8px;top:978px;width:1px;height:21px;background:#d8d8d8;"></div>
<div class="r" style="left:1087.5px;top:978px;width:1px;height:21px;background:#d8d8d8;"></div>
<div class="r" style="left:0px;top:138px;width:1161px;height:861px;background:rgba(0,0,0,0.557);"></div>
<div class="r" style="left:0px;top:138px;width:1px;height:861px;background:rgba(255,255,255,0.14);"></div>
<div class="r" style="left:572px;top:448px;width:575.5px;height:535px;background:#fff;border-radius:3px;box-shadow:0 0 0 1px rgba(200,220,235,0.35);"></div>
<div class="t" style="left:596.60px;top:469.60px;font-size:21.4px;line-height:29.96px;color:#1b2a32;font-weight:normal;font-style:normal;font-family:'Liberation Sans', sans-serif;letter-spacing:0.05px;">Creating Version</div>
<svg class="r" style="left:1101px;top:476px;" width="18" height="18" viewBox="0 0 18 18"><path d="M2.5,2.5 L15.5,15.5 M15.5,2.5 L2.5,15.5" stroke="#4d5a61" stroke-width="1.5"/></svg>
<div class="t" style="left:597.00px;top:554.19px;font-size:13px;line-height:18.2px;color:#34424a;font-weight:bold;font-style:normal;font-family:'Liberation Sans', sans-serif;letter-spacing:0px;">Version</div>
<div class="t" style="left:649.60px;top:553.39px;font-size:13px;line-height:18.2px;color:#e02020;font-weight:bold;font-style:normal;font-family:'Liberation Sans', sans-serif;letter-spacing:0px;">*</div>
<div class="t" style="left:596.80px;top:661.59px;font-size:13px;line-height:18.2px;color:#34424a;font-weight:bold;font-style:normal;font-family:'Liberation Sans', sans-serif;letter-spacing:0px;">Description</div>
<div class="t" style="left:596.80px;top:733.79px;font-size:13px;line-height:18.2px;color:#34424a;font-weight:bold;font-style:normal;font-family:'Liberation Sans', sans-serif;letter-spacing:0px;">Change log</div>
<div class="t" style="left:833.20px;top:554.63px;font-size:12.3px;line-height:17.22px;color:#333;font-weight:normal;font-style:normal;font-family:'Liberation Sans', sans-serif;letter-spacing:0px;">0.1.3</div>
<div class="r" style="left:831px;top:574px;width:260px;height:1px;background:#5c6b73;"></div>
<div class="t" style="left:825.00px;top:614.58px;font-size:12.15px;line-height:17.01px;color:#3a4a52;font-weight:normal;font-style:italic;font-family:'Liberation Sans', sans-serif;letter-spacing:0px;">Last Version: 0.1.2</div>
<div class="r" style="left:825px;top:659.3px;width:286px;height:47.30000000000007px;border:1px solid #6b7a82;border-radius:3px;box-sizing:border-box;"></div>
<svg class="r" style="left:1101px;top:695.6px;" width="10" height="11" viewBox="0 0 10 11"><path d="M7.8,2.2 L1.2,8.9 M7.8,6.6 L5,9.3" stroke="#555" stroke-width="0.9" stroke-dasharray="1 0.6"/></svg>
<div class="r" style="left:825px;top:731.2px;width:286px;height:47.5px;border:1px solid #6b7a82;border-radius:3px;box-sizing:border-box;"></div>
<svg class="r" style="left:1101px;top:767.7px;" width="10" height="11" viewBox="0 0 10 11"><path d="M7.8,2.2 L1.2,8.9 M7.8,6.6 L5,9.3" stroke="#555" stroke-width="0.9" stroke-dasharray="1 0.6"/></svg>
<div class="r" style="left:825px;top:807px;width:16px;height:16px;border:1px solid #6b7a82;border-radius:3px;box-sizing:border-box;"></div>
<div class="t" style="left:848.50px;top:804.66px;font-size:13.7px;line-height:19.18px;color:#333;font-weight:normal;font-style:normal;font-family:'Liberation Sans', sans-serif;letter-spacing:0px;">Release this version to the catalog</div>
<div class="t" style="left:825.00px;top:832.39px;font-size:11px;line-height:15.4px;color:#3d4a52;font-weight:normal;font-style:normal;font-family:'Liberation Sans', sans-serif;letter-spacing:0.58px;">This Template is restricted to this project in the</div>
<div class="t" style="left:825.00px;top:848.49px;font-size:11px;line-height:15.4px;color:#3d4a52;font-weight:normal;font-style:normal;font-family:'Liberation Sans', sans-serif;letter-spacing:0.58px;">catalog. Edit shareability in Template level settings.</div>
<div class="r" style="left:954px;top:923px;width:82px;height:36px;border:1px solid #0079b8;border-radius:3px;box-sizing:border-box;"></div>
<div class="t" style="left:967.30px;top:932.64px;font-size:12px;line-height:16.8px;color:#0079b8;font-weight:bold;font-style:normal;font-family:'Liberation Sans', sans-serif;letter-spacing:0.85px;">CANCEL</div>
<div class="r" style="left:1044px;top:923px;width:79px;height:36px;background:#0577b0;border-radius:3px;"></div>
<div class="t" style="left:1056.60px;top:932.64px;font-size:12px;line-height:16.8px;color:#fff;font-weight:bold;font-style:normal;font-family:'Liberation Sans', sans-serif;letter-spacing:0.85px;">CREATE</div>
<svg class="r" style="left:800px;top:545px;" width="40" height="52" viewBox="0 0 40 52"><defs><filter id="sh" x="-50%" y="-50%" width="200%" height="200%"><feGaussianBlur in="SourceAlpha" stdDeviation="1.1"/><feOffset dx="0.8" dy="1.6" result="b"/><feComponentTransfer><feFuncA type="linear" slope="0.5"/></feComponentTransfer><feMerge><feMergeNode/><feMergeNode in="SourceGraphic"/></feMerge></filter></defs><g transform="translate(-800,-545)"><polygon points="810.6,554.2 810.6,584.4 816.3,580.0 821.0,589.6 827.7,586.6 823.4,576.8 831.2,575.6" fill="#fff" filter="url(#sh)"/><polygon points="812.4,558.4 812.4,579.9 817.5,575.4 822.1,586.6 825.6,585.0 821.2,574.1 829.0,574.1" fill="#000"/></g></svg>
</body></html>
